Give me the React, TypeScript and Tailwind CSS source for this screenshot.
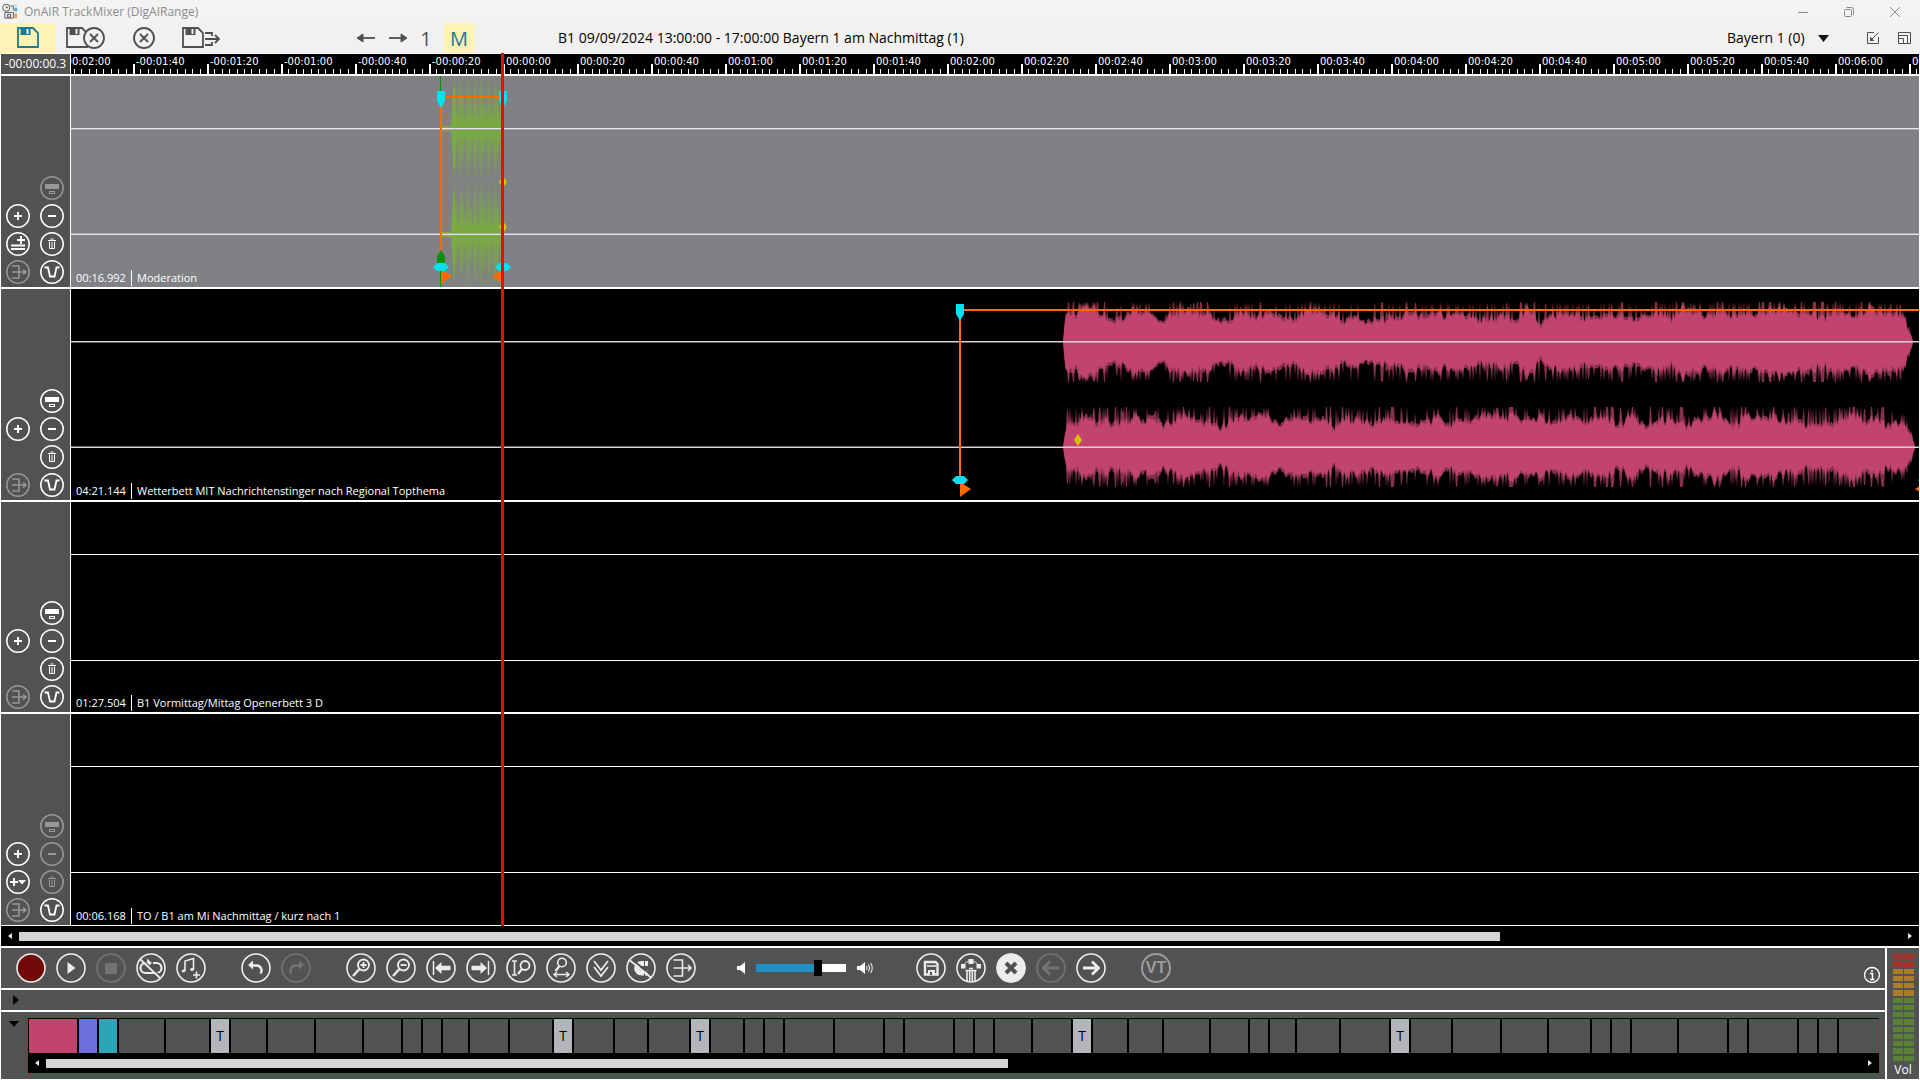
import React from 'react';

type Point = [number, number];

/* ---------- wave form helpers ---------- */

const noise = (n: number, seed: number) => {
  const v = Math.sin(n * 12.9898 + seed * 78.233) * 43758.5453;
  return v - Math.floor(v);
};

const smooth = (x: number, seed: number) => {
  const i = Math.floor(x);
  const f = x - i;
  return noise(i, seed) * (1 - f) + noise(i + 1, seed) * f;
};

const mirrored = (points: Point[], mid: number) => {
  const top = points.map(([x, a]) => `${x},${(mid - a).toFixed(1)}`);
  const bottom = [...points].reverse().map(([x, a]) => `${x},${(mid + a).toFixed(1)}`);
  return `M${top.join('L')}L${bottom.join('L')}Z`;
};

const musicWave = (from: number, to: number, seed: number) => {
  const inner: Point[] = [[from, 0]];
  const outer: Point[] = [[from, 0]];
  for (let x = from + 2; x < to; x += 1) {
    const fadeIn = Math.min(1, 0.3 + (x - from) / 5);
    const fadeOut = Math.min(1, Math.pow((to - x) / 14, 0.7));
    const env = Math.min(fadeIn, fadeOut);
    const body = 13 + 13 * smooth(x / 13, seed) + 9 * smooth(x / 2.5, seed + 1);
    const spike = noise(x, seed + 2) > 0.72 ? 5 + 12 * noise(x, seed + 3) : 0;
    const swell = Math.exp(-Math.pow((x - from - 23) / 6, 2)) * 12;
    const a = Math.min(38, body + swell + spike * 0.5);
    inner.push([x, a * env]);
    outer.push([x, Math.min(40, a + 1 + spike + 4 * noise(x, seed + 4)) * env]);
  }
  inner.push([to, 0]);
  outer.push([to, 0]);
  return { inner, outer };
};

const speechWave = (from: number, to: number, seed: number) => {
  const points: Point[] = [[from, 3]];
  for (let x = from + 1; x <= to; x += 1) {
    const phase = (x - from + Math.floor(2 * noise(Math.floor(x / 7), seed))) % 7;
    const peak = phase < 3 ? 52 : phase < 5 ? 30 : 12;
    points.push([x, Math.min(52, peak * (0.7 + 0.5 * noise(x, seed)))]);
  }
  return points;
};

/* ---------- markers ---------- */

const Pin = ({ x, y }: { x: number; y: number }) => (
  <path d={`M${x - 4} ${y}h8v10l-4 7l-4 -7z`} fill="#00e1f2" />
);

const Handle = ({ x, y }: { x: number; y: number }) => (
  <path d={`M${x - 8} ${y + 4}l4 -4h8l4 4l-4 4h-8z`} fill="#00e1f2" />
);

const Diamond = ({ x, y }: { x: number; y: number }) => (
  <path d={`M${x} ${y - 6}l4 6l-4 6l-4 -6z`} fill="#d9c400" />
);

const CenterLines = ({ color, dim }: { color: string; dim: string }) => (
  <g>
    <rect x="0" y="52" width="100%" height="1" fill={color} />
    <rect x="0" y="53" width="100%" height="1" fill={dim} />
    <rect x="0" y="157" width="100%" height="1" fill={dim} />
    <rect x="0" y="158" width="100%" height="1" fill={color} />
  </g>
);

const ModerationClip = () => (
  <g>
    <defs>
      <linearGradient id="speech" x1="0" y1="0" x2="0" y2="1">
        <stop offset="0" stopColor="#7aaa42" stopOpacity="0.15" />
        <stop offset="0.3" stopColor="#7aaa42" stopOpacity="0.65" />
        <stop offset="0.5" stopColor="#7aaa42" />
        <stop offset="0.7" stopColor="#7aaa42" stopOpacity="0.65" />
        <stop offset="1" stopColor="#7aaa42" stopOpacity="0.15" />
      </linearGradient>
    </defs>
    <rect x="369" y="0" width="1" height="211" fill="#0a8f0a" />
    {[52, 158].map((mid) => (
      <g key={mid}>
        <rect x="371" y={mid - 2} width="10" height="5" fill="#7aaa42" />
        <rect x="382" y={mid - 52} width="48" height="104" fill="url(#speech)" opacity="0.25" />
        <path d={mirrored(speechWave(382, 430, mid), mid)} fill="url(#speech)" />
        <path d={`M380 ${mid}L383 ${mid - 50}L386 ${mid}L383 ${mid + 50}Z`} fill="#7aaa42" />
        <rect x="381" y={mid - 8} width="48" height="16" fill="#7aaa42" opacity="0.6" />
      </g>
    ))}
    <CenterLines color="#e6e6e6" dim="#a9aaac" />
    <rect x="369" y="20" width="2" height="160" fill="#ff6a00" />
    <rect x="371" y="20" width="60" height="2" fill="#ff6a00" />
    <Pin x={370} y={15} />
    <Pin x={432} y={15} />
    <Diamond x={432} y={106} />
    <Diamond x={432} y={151} />
    <path d="M366 187v-7l4 -6l4 6v7z" fill="#0a8f0a" />
    <path d="M370 193l11 7l-11 8z" fill="#ff6a00" />
    <path d="M432 193l-11 7l11 8z" fill="#ff6a00" />
    <Handle x={370} y={187} />
    <Handle x={432} y={187} />
  </g>
);

const upper = musicWave(992, 1842, 3);
const lower = musicWave(992, 1844, 8);

const MusicClip = () => (
  <g>
    {[
      { mid: 53, wave: upper },
      { mid: 158, wave: lower },
    ].map(({ mid, wave }) => (
      <g key={mid} fill="#c0446e">
        <path d={mirrored(wave.outer, mid)} opacity="0.7" />
        <path d={mirrored(wave.inner, mid)} />
      </g>
    ))}
    <CenterLines color="#e0cdd4" dim="#ffffff66" />
    <rect x="888" y="20" width="2" height="168" fill="#ff6a00" />
    <rect x="890" y="20" width="100%" height="2" fill="#ff6a00" />
    <Pin x={889} y={15} />
    <path d="M889 193l11 7l-11 8z" fill="#ff6a00" />
    <Handle x={889} y={187} />
    <Diamond x={1007} y={151} />
    <path d="M1855 193l-11 7l11 7z" fill="#ff6a00" />
    <Handle x={1855} y={187} />
  </g>
);

/* ---------- track sidebar icons, drawn on a 24px grid ---------- */

const trackIcons: Record<string, React.ReactNode> = {
  fader: (
    <>
      <rect x="5" y="8" width="14" height="5" fill="currentColor" stroke="none" />
      <rect x="9.5" y="15.5" width="5" height="2" fill="none" />
    </>
  ),
  add: <path d="M8 12h8M12 8v8" strokeWidth="2" />,
  remove: <path d="M8 12h8" strokeWidth="2" />,
  addRows: <path d="M5 13.5h14M5 17h14M11 8h8M15 4v8" strokeWidth="2" />,
  addMenu: (
    <>
      <path d="M4 12h8M8 8v8" strokeWidth="2" />
      <path d="M12 10h8l-4 4.5z" fill="currentColor" stroke="none" />
    </>
  ),
  trash: <path d="M8 8.500h8M10.500 7h3M9.500 9.500v7h5v-7M12 10v6" />,
  merge: <path d="M6 6h7v12H6M6 12h13M17 9.5l3 2.5l-3 2.5" strokeWidth="1.6" />,
  duck: <path d="M4.5 7.5h3.500l2 9h4.500l2 -9h3" strokeWidth="1.8" />,
};

const TrackButton = ({ icon, label, off = false }: { icon: string; label: string; off?: boolean }) => (
  <button type="button" aria-label={label} disabled={off} className={off ? 'size-6 text-[#979797]' : 'size-6 text-white'}>
    <svg viewBox="0 0 24 24" className="size-6" fill="none" stroke="currentColor">
      <circle cx="12" cy="12" r="11.200" strokeWidth="1.5" />
      {trackIcons[icon]}
    </svg>
  </button>
);

type Track = {
  time: string;
  title: string;
  selected?: boolean;
  extra?: string;
  locked?: boolean;
  faderOff?: boolean;
  clip?: React.ReactNode;
};

const tracks: Track[] = [
  { time: '00:16.992', title: 'Moderation', selected: true, extra: 'addRows', faderOff: true, clip: <ModerationClip /> },
  { time: '04:21.144', title: 'Wetterbett MIT Nachrichtenstinger nach Regional Topthema', clip: <MusicClip /> },
  { time: '01:27.504', title: 'B1 Vormittag/Mittag Openerbett 3 D' },
  { time: '00:06.168', title: 'TO / B1 am Mi Nachmittag / kurz nach 1', extra: 'addMenu', locked: true, faderOff: true },
];

const TrackRow = ({ track }: { track: Track }) => (
  <div className="flex min-h-0 shrink grow-[213] basis-0 border-b-2 border-white last-of-type:border-b">
    <div className="flex w-[70px] shrink-0 items-end border-r border-white bg-[#525252] pb-[3px] pl-[5px]">
      <div className="grid grid-cols-2 gap-x-2.5 gap-y-1">
        <span />
        <TrackButton icon="fader" label="Fader" off={track.faderOff} />
        <TrackButton icon="add" label="Add" />
        <TrackButton icon="remove" label="Remove" off={track.locked} />
        {track.extra ? <TrackButton icon={track.extra} label="Insert" /> : <span />}
        <TrackButton icon="trash" label="Delete" off={track.locked} />
        <TrackButton icon="merge" label="Merge" off />
        <TrackButton icon="duck" label="Ducking" />
      </div>
    </div>
    <div className={track.selected ? 'relative min-w-0 flex-1 bg-[#808185]' : 'relative min-w-0 flex-1 bg-black'}>
      <svg className="absolute inset-0 size-full overflow-hidden" aria-hidden="true">
        {track.clip ?? <CenterLines color="#ffffff" dim="transparent" />}
      </svg>
      <div className="absolute bottom-px left-[5px] flex h-4 items-center text-[11px] leading-4 text-white">
        <span className="w-[55px]">{track.time}</span>
        <span className="h-4 border-l border-white pl-[5px]">{track.title}</span>
      </div>
    </div>
  </div>
);

/* ---------- ruler ---------- */

const formatTime = (seconds: number) => {
  const abs = Math.abs(seconds);
  const mm = String(Math.floor(abs / 60)).padStart(2, '0');
  const ss = String(abs % 60).padStart(2, '0');
  return `${seconds < 0 ? '-' : ''}00:${mm}:${ss}`;
};

const marks = Array.from({ length: 26 }, (_, i) => (i - 6) * 20);

const Ruler = () => (
  <div className="flex h-[22px] shrink-0 border-b-2 border-white bg-black">
    <div className="flex w-[70px] shrink-0 items-center justify-center border-r border-white bg-[#525252] text-xs text-white">
      -00:00:00.3
    </div>
    <div className="flex min-w-0 flex-1 overflow-hidden">
      <div className="-ml-3 flex">
        {marks.map((seconds) => (
          <div key={seconds} className="relative h-5 w-[74px] shrink-0">
            <svg className="absolute inset-0 size-full" fill="#fff" shapeRendering="crispEdges">
              <rect x="0" y="10" width="2" height="10" />
              {[1, 2, 3, 4, 5, 6, 7, 8, 9].map((n) => (
                <rect key={n} x={Math.round(n * 7.4)} y="15" width="1" height="5" />
              ))}
            </svg>
            <span className="relative block pt-0.5 pl-[3px] font-['DejaVu_Sans'] text-[10px] leading-3 whitespace-nowrap text-white">
              {formatTime(seconds)}
            </span>
          </div>
        ))}
      </div>
    </div>
  </div>
);

/* ---------- transport icons, drawn on a 30px grid ---------- */

const lens = (
  <>
    <circle cx="17.500" cy="12" r="5.500" strokeWidth="1.8" />
    <path d="M13.500 16L7 23" strokeWidth="2.500" />
  </>
);

const toolIcons: Record<string, React.ReactNode> = {
  record: <circle cx="15" cy="15" r="13.500" fill="#730909" stroke="none" />,
  play: <path d="M11.500 9v12l8 -6z" fill="currentColor" stroke="none" />,
  stop: <rect x="9" y="10" width="12" height="11" fill="currentColor" stroke="none" />,
  loopOff: (
    <>
      <path d="M12 10H9.500a4.500 4.500 0 0 0 0 10H20.500a4.500 4.500 0 0 0 0 -10H17" strokeWidth="2.200" />
      <path d="M11 5.500l5 4.500l-5 4.500z" fill="currentColor" stroke="none" />
      <path d="M5 5L25 24" stroke="#525252" strokeWidth="1.500" />
      <path d="M4 6L24 25" strokeWidth="1.800" />
    </>
  ),
  noteAdd: (
    <>
      <path d="M9 18V8l8.500 -2.500v11" strokeWidth="1.600" />
      <ellipse cx="7.500" cy="18" rx="1.500" ry="1" fill="currentColor" />
      <ellipse cx="16" cy="16.500" rx="1.500" ry="1" fill="currentColor" />
      <path d="M17 22h7M20.500 18.500v7" strokeWidth="1.600" />
    </>
  ),
  undo: (
    <>
      <path d="M10 12.500h5.500a5 5 0 0 1 4 8" strokeWidth="2.400" />
      <path d="M7 12l5 -4.500v9z" fill="currentColor" stroke="none" />
    </>
  ),
  redo: (
    <>
      <path d="M20 12.500h-5.500a5 5 0 0 0 -4 8" strokeWidth="2.400" />
      <path d="M23 12l-5 -4.500v9z" fill="currentColor" stroke="none" />
    </>
  ),
  zoomIn: (
    <>
      {lens}
      <path d="M14.500 12h6M17.500 9v6" strokeWidth="1.800" />
    </>
  ),
  zoomOut: (
    <>
      {lens}
      <path d="M14.500 12h6" strokeWidth="1.800" />
    </>
  ),
  toStart: (
    <>
      <path d="M7.500 8v14" strokeWidth="1.500" />
      <path d="M9 15l6.500 -6v3.800h9v4.400h-9v3.800z" fill="currentColor" stroke="none" />
    </>
  ),
  toEnd: (
    <>
      <path d="M22.500 8v14" strokeWidth="1.500" />
      <path d="M21 15l-6.500 -6v3.800h-9v4.400h9v3.800z" fill="currentColor" stroke="none" />
    </>
  ),
  zoomHeight: (
    <>
      <path d="M6 8h5M6 22h5M8.500 8v14" strokeWidth="1.600" />
      <circle cx="19" cy="12.500" r="4.500" strokeWidth="1.800" />
      <path d="M16 16l-4 5" strokeWidth="2.200" />
    </>
  ),
  zoomWidth: (
    <>
      <circle cx="16" cy="9.500" r="4.300" strokeWidth="1.600" />
      <path d="M13.500 13l-4 5" strokeWidth="2.200" />
      <path d="M9 21.500h13M11 19l-3 2.500l3 2.500M20 19l3 2.500l-3 2.500" strokeWidth="1.500" />
    </>
  ),
  down: <path d="M8 8l7 9l7 -9M8 14l7 9l7 -9" strokeWidth="1.700" />,
  magnetOff: (
    <>
      <path d="M18 10.500h-2.500a4.800 4.800 0 0 0 0 9.600h2.500" strokeWidth="5" />
      <path d="M19 10.500h3M19 20.100h3" strokeWidth="5" />
      <path d="M5.500 6L26 22.500" stroke="#525252" strokeWidth="1.800" />
      <path d="M4 7.500L25 24.500" strokeWidth="1.800" />
    </>
  ),
  merge: <path d="M7.500 7h9v16h-9M7.500 15h17M22 12l3 3l-3 3" strokeWidth="1.600" />,
  save: (
    <>
      <path d="M9 9h10.500l2 2v10.500h-12.500z" strokeWidth="2.400" />
      <path d="M11 13h9" strokeWidth="1.600" />
      <rect x="12" y="17" width="7" height="5" fill="currentColor" stroke="none" />
      <rect x="14" y="19" width="2" height="3" fill="#525252" stroke="none" />
    </>
  ),
  trashCurve: (
    <>
      <path d="M7 13a9 9 0 0 1 16 0" />
      <rect x="12.500" y="6" width="5" height="5" fill="currentColor" stroke="none" />
      <rect x="5" y="11" width="4.500" height="4.500" fill="currentColor" stroke="none" />
      <rect x="20.500" y="11" width="4.500" height="4.500" fill="currentColor" stroke="none" />
      <path d="M9.500 17.500h11M13 15.500h4M11 18v10M13.700 18v10M16.300 18v10M19 18v10" strokeWidth="1.600" />
    </>
  ),
  cancel: (
    <>
      <circle cx="15" cy="15" r="14" fill="currentColor" />
      <path d="M10 10l10 10M20 10l-10 10" stroke="#525252" strokeWidth="4" />
    </>
  ),
  prev: <path d="M23 15H8M14 8.500L7.500 15l6.500 6.500" strokeWidth="2.800" />,
  next: <path d="M7 15h15M16 8.500l6.500 6.500l-6.500 6.500" strokeWidth="2.800" />,
};

const ToolButton = ({ icon, off = false }: { icon: string; off?: boolean }) => (
  <button type="button" aria-label={icon} disabled={off} className={off ? 'size-[30px] text-[#747474]' : 'size-[30px] text-[#ececec]'}>
    <svg viewBox="0 0 30 30" className="size-[30px]" fill="none" stroke="currentColor">
      {toolIcons[icon]}
      <circle cx="15" cy="15" r="14" strokeWidth="1.6" />
    </svg>
  </button>
);

const Transport = () => (
  <div className="flex h-10 items-center gap-[35px] bg-[#525252] pl-[15px]">
    <div className="flex gap-2.5">
      <ToolButton icon="record" />
      <ToolButton icon="play" />
      <ToolButton icon="stop" off />
      <ToolButton icon="loopOff" />
      <ToolButton icon="noteAdd" />
    </div>
    <div className="flex gap-2.5">
      <ToolButton icon="undo" />
      <ToolButton icon="redo" off />
    </div>
    <div className="flex gap-2.5">
      {['zoomIn', 'zoomOut', 'toStart', 'toEnd', 'zoomHeight', 'zoomWidth', 'down', 'magnetOff', 'merge'].map((icon) => (
        <ToolButton key={icon} icon={icon} />
      ))}
    </div>
    <div className="flex items-center gap-[11px] px-1.5 text-white">
      <svg viewBox="0 0 8 12" className="h-3 w-2" fill="currentColor">
        <path d="M0 4h3l5 -4v12l-5 -4H0z" />
      </svg>
      <input
        type="range"
        aria-label="Volume"
        defaultValue={71}
        className="h-4 w-[90px] appearance-none bg-transparent [&::-webkit-slider-runnable-track]:h-2 [&::-webkit-slider-runnable-track]:bg-[linear-gradient(to_right,#2090c4_68%,#fff_68%)] [&::-webkit-slider-thumb]:-mt-1 [&::-webkit-slider-thumb]:h-4 [&::-webkit-slider-thumb]:w-2 [&::-webkit-slider-thumb]:appearance-none [&::-webkit-slider-thumb]:bg-black"
      />
      <svg viewBox="0 0 16 12" className="h-3 w-4" fill="none" stroke="currentColor">
        <path d="M0 4h3l5 -4v12l-5 -4H0z" fill="currentColor" stroke="none" />
        <path d="M9.500 4q1.500 2 0 4M11.500 2.500q2.500 3.500 0 7M13.500 1q3.500 5 0 10" />
      </svg>
    </div>
    <div className="flex gap-2.5 pl-0.5">
      <ToolButton icon="save" />
      <ToolButton icon="trashCurve" />
      <ToolButton icon="cancel" />
      <ToolButton icon="prev" off />
      <ToolButton icon="next" />
    </div>
    <button
      type="button"
      disabled
      className="size-[30px] rounded-full border-2 border-[#9c9c9c] font-['Liberation_Sans'] text-base leading-none font-bold text-[#9c9c9c]"
    >
      <span className="-mx-1">VT</span>
    </button>
    <button type="button" aria-label="Info" className="mt-3.5 mr-1 ml-auto size-[18px] text-white">
      <svg viewBox="0 0 18 18" className="size-[18px]" fill="none" stroke="currentColor">
        <circle cx="9" cy="9" r="7.500" strokeWidth="1.300" />
        <path d="M7 7.500h2.500v5.500M7 13.500h4.500" strokeWidth="1.500" />
        <circle cx="9" cy="5" r="1" fill="currentColor" stroke="none" />
      </svg>
    </button>
  </div>
);

/* ---------- playlist overview ---------- */

const blocks: { w: number; kind?: string }[] = [
  { w: 48, kind: 'music' }, { w: 18, kind: 'jingle' }, { w: 18, kind: 'bed' }, { w: 45 }, { w: 43 }, { w: 18, kind: 'T' },
  { w: 35 }, { w: 46 }, { w: 46 }, { w: 37 }, { w: 18 }, { w: 18 }, { w: 25 }, { w: 38 }, { w: 42 }, { w: 18, kind: 'T' },
  { w: 39 }, { w: 32 }, { w: 40 }, { w: 18, kind: 'T' }, { w: 32 }, { w: 18 }, { w: 18 }, { w: 48 }, { w: 48 }, { w: 18 },
  { w: 48 }, { w: 18 }, { w: 18 }, { w: 36 }, { w: 38 }, { w: 18, kind: 'T' }, { w: 34 }, { w: 33 }, { w: 45 }, { w: 37 },
  { w: 18 }, { w: 25 }, { w: 42 }, { w: 48 }, { w: 18, kind: 'T' }, { w: 40 }, { w: 47 }, { w: 45 }, { w: 41 }, { w: 18 },
  { w: 18 }, { w: 45 }, { w: 48 }, { w: 18 }, { w: 48 }, { w: 18 }, { w: 18 }, { w: 40 },
];

const blockStyles: Record<string, string> = {
  music: 'bg-[#c0446e]',
  jingle: 'bg-[#6f6ede]',
  bed: 'bg-[#2ba5b8]',
  T: 'bg-[#b4b5ba]',
};

const Arrow = ({ left = false }: { left?: boolean }) => (
  <button type="button" aria-label={left ? 'Scroll left' : 'Scroll right'} className="flex w-[18px] shrink-0 justify-center text-[#e8e8e8]">
    <svg viewBox="0 0 4 6" className="h-1.5 w-1" fill="currentColor">
      <path d={left ? 'M4 0v6l-4 -3z' : 'M0 0v6l4 -3z'} />
    </svg>
  </button>
);

const Overview = () => (
  <div className="flex flex-1 bg-[#525252] pr-[5px]">
    <button type="button" aria-label="Collapse" className="flex w-[26px] items-start justify-center pt-[9px]">
      <svg viewBox="0 0 10 6" className="h-1.5 w-2.5">
        <path d="M0 0h10l-5 6z" />
      </svg>
    </button>
    <div className="mt-[5px] mb-[5px] flex min-w-0 flex-1 flex-col overflow-hidden border border-[#c8193c] bg-black">
      <div className="flex gap-0.5 overflow-hidden px-px pt-px">
        {blocks.map((block, i) => (
          <div
            key={i}
            style={{ width: block.w }}
            className={`flex h-[34px] shrink-0 items-center justify-center text-sm text-black ${block.kind ? blockStyles[block.kind] : 'bg-[#525252]'}`}
          >
            {block.kind === 'T' && 'T'}
          </div>
        ))}
      </div>
      <div className="flex flex-1 items-center">
        <Arrow left />
        <div className="flex-1">
          <div className="h-[9px] w-[53%] bg-[#d3d3d3]" />
        </div>
        <Arrow />
      </div>
    </div>
  </div>
);

const Meter = () => (
  <div className="flex w-8 flex-col items-center bg-[#525252] pt-1.5">
    <div className="flex h-[107px] flex-col gap-0.5">
      {Array.from({ length: 15 }, (_, i) => {
        const color = i < 2 ? 'w-2.5 bg-[#a03228]' : i < 6 ? 'w-2.5 bg-[#a97d2c]' : 'w-2.5 bg-[#5a8236]';
        return (
          <div key={i} className="flex flex-1 gap-px">
            <div className={color} />
            <div className={color} />
          </div>
        );
      })}
    </div>
    <span className="text-xs leading-[18px] text-white">Vol</span>
  </div>
);

/* ---------- window header ---------- */

const Disk = ({ children, wide = false }: { children?: React.ReactNode; wide?: boolean }) => (
  <svg viewBox={wide ? '0 0 40 24' : '0 0 24 24'} className={wide ? 'h-6 w-10' : 'size-6'} fill="none" stroke="currentColor" strokeWidth="1.800">
    <path d="M2 2h15l5 5v14H2z" />
    <path d="M4.500 2h10v7h-10z" fill="currentColor" stroke="none" />
    <path d="M11.500 3v5" stroke="#f2f1ef" strokeWidth="2" />
    {children}
  </svg>
);

const Header = () => (
  <header>
    <div className="flex h-[23px] items-center bg-[#f3f3f3] text-xs text-[#8c8c8c]">
      <svg viewBox="0 0 18 18" className="mr-[5px] ml-0.5 size-[17px]" fill="none" stroke="#555">
        <circle cx="4.500" cy="5" r="3.800" />
        <path d="M4.500 3v2h2M9 3h3v5M3 10v6h9v-6z" />
        <rect x="6" y="12" width="3" height="3" />
        <rect x="13" y="1" width="3" height="3" fill="#d8d8d8" stroke="none" />
        <rect x="13" y="5" width="3" height="4" fill="#3cb4d8" stroke="none" />
        <rect x="13" y="11" width="3" height="5" fill="#f0a040" stroke="none" />
      </svg>
      <h1>OnAIR TrackMixer (DigAIRange)</h1>
      <div className="mr-5 ml-auto flex gap-9 text-[#8a8a8a]">
        <button type="button" aria-label="Minimize">
          <svg viewBox="0 0 10 10" className="size-2.5" stroke="currentColor"><path d="M0 5.500h10" /></svg>
        </button>
        <button type="button" aria-label="Restore">
          <svg viewBox="0 0 10 10" className="size-2.5" stroke="currentColor" fill="none">
            <rect x="0.500" y="2.500" width="7" height="7" rx="1" />
            <path d="M2.500 0.500h5a2 2 0 0 1 2 2v5" />
          </svg>
        </button>
        <button type="button" aria-label="Close">
          <svg viewBox="0 0 10 10" className="size-2.5" stroke="currentColor"><path d="M0 0l10 10M10 0L0 10" /></svg>
        </button>
      </div>
    </div>
    <div className="flex h-[30px] items-stretch bg-[#f2f1ef] text-[#505050]">
      <button type="button" aria-label="Save" className="flex w-14 items-center justify-center bg-[#fcf3b4] text-[#1b7a94]">
        <Disk />
      </button>
      <button type="button" aria-label="Save and close" className="ml-[5px] flex w-12 items-center justify-center">
        <Disk wide>
          <circle cx="29" cy="12" r="10" fill="#f2f1ef" />
          <path d="M25 8l8 8M33 8l-8 8" />
        </Disk>
      </button>
      <button type="button" aria-label="Close" className="ml-[23px] flex w-6 items-center justify-center">
        <svg viewBox="0 0 24 24" className="size-6" fill="none" stroke="currentColor" strokeWidth="1.800">
          <circle cx="12" cy="12" r="10" />
          <path d="M8 8l8 8M16 8l-8 8" />
        </svg>
      </button>
      <button type="button" aria-label="Export" className="ml-[25px] flex w-10 items-center justify-center">
        <Disk wide>
          <path d="M24 7h7v3M24 13h14M34 9l4 4l-4 4M31 16v3h-7" />
        </Disk>
      </button>
      <button type="button" aria-label="Back" className="ml-[135px] flex w-5 items-center">
        <svg viewBox="0 0 20 12" className="h-3 w-5" fill="currentColor" stroke="currentColor" strokeWidth="1.800">
          <path d="M19 6H3" /><path d="M1 6l6 -4v8z" strokeWidth="1" />
        </svg>
      </button>
      <button type="button" aria-label="Forward" className="ml-3 flex w-5 items-center">
        <svg viewBox="0 0 20 12" className="h-3 w-5" fill="currentColor" stroke="currentColor" strokeWidth="1.800">
          <path d="M1 6h16" /><path d="M19 6l-6 -4v8z" strokeWidth="1" />
        </svg>
      </button>
      <button type="button" className="w-9 pt-0.5 text-xl leading-none">1</button>
      <button type="button" className="w-[30px] bg-[#fcf3b4] pt-0.5 text-xl leading-none text-[#1b7a94]">M</button>
      <p className="ml-[84px] self-center text-sm text-black">
        B1 09/09/2024 13:00:00 - 17:00:00 Bayern 1 am Nachmittag (1)
      </p>
      <div className="ml-auto flex items-center">
        <select aria-label="Station" className="w-[91px] appearance-none text-sm text-black">
          <option>Bayern 1 (0)</option>
        </select>
        <svg viewBox="0 0 11 7" className="mr-[38px] h-[7px] w-[11px]" fill="#111"><path d="M0 0h11l-5.500 7z" /></svg>
        <button type="button" aria-label="Dock" className="mr-[19px]">
          <svg viewBox="0 0 12 12" className="size-3" fill="none" stroke="currentColor">
            <path d="M7 0.500H0.500v11h11V5M11.500 0.500L4 8" />
            <path d="M3 9V4.500l4.500 4.500z" fill="currentColor" stroke="none" />
          </svg>
        </button>
        <button type="button" aria-label="Layout" className="mr-[9px]">
          <svg viewBox="0 0 13 12" className="h-3 w-[13px]" fill="none" stroke="currentColor">
            <path d="M0.500 0.500h12v11h-12zM0.500 3.500h9v8M0.500 6.500h5v5" />
          </svg>
        </button>
      </div>
    </div>
  </header>
);

export default function App() {
  return (
    <div className="flex h-screen min-h-[700px] flex-col overflow-hidden bg-white pb-px font-['Open_Sans',sans-serif]">
      <Header />
      <main className="flex min-h-0 flex-1 flex-col px-px pt-px">
        <section className="relative flex min-h-0 flex-1 flex-col">
          <Ruler />
          <div className="flex min-h-0 flex-1 flex-col">
            {tracks.map((track) => (
              <TrackRow key={track.time} track={track} />
            ))}
          </div>
          <div className="absolute -top-px bottom-0 left-[500px] w-[3px] bg-[#ff0000]" />
        </section>
        <div className="flex h-5 items-center bg-black">
          <Arrow left />
          <div className="flex-1">
            <div className="h-[9px] w-[78.7%] bg-[#d3d3d3]" />
          </div>
          <Arrow />
        </div>
        <div className="flex h-[133px] gap-0.5 pt-0.5">
          <div className="flex min-w-0 flex-1 flex-col gap-0.5">
            <Transport />
            <div className="flex h-5 items-center bg-[#525252] pl-3">
              <button type="button" aria-label="Expand">
                <svg viewBox="0 0 6 10" className="h-2.5 w-1.5"><path d="M0 0v10l6 -5z" /></svg>
              </button>
            </div>
            <Overview />
          </div>
          <Meter />
        </div>
      </main>
    </div>
  );
}
